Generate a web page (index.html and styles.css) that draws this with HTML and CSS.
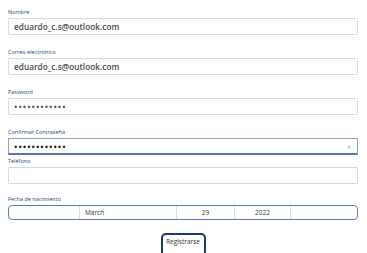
FILE: index.html
```html
<!DOCTYPE html>
<html lang="es">
<head>
    <meta charset="UTF-8">
    <meta name="viewport" content="width=device-width, initial-scale=1.0">
    <title>Registro</title>
    <link rel="stylesheet" href="styles.css">
</head>
<body>
    <form class="signup">
        <div class="field">
            <label for="nombre">Nombre</label>
            <input type="text" id="nombre" value="eduardo_c.s@outlook.com">
        </div>
        <div class="field">
            <label for="correo">Correo electrónico</label>
            <input type="text" id="correo" value="eduardo_c.s@outlook.com">
        </div>
        <div class="field">
            <label for="password">Password</label>
            <input type="password" id="password" class="secret" value="abcdefghijkl">
        </div>
        <div class="field field-tight">
            <label for="confirmar">Confirmar Contraseña</label>
            <div class="input-wrap focused">
                <input type="password" id="confirmar" class="secret dark" value="abcdefghijkl">
                <span class="clear">&#x2715;</span>
            </div>
        </div>
        <div class="field field-phone">
            <label for="telefono">Teléfono</label>
            <input type="text" id="telefono" value="">
        </div>
        <div class="field">
            <label>Fecha de nacimiento</label>
            <div class="date-picker">
                <span class="seg seg-side"></span>
                <span class="seg seg-month">March</span>
                <span class="seg seg-day">29</span>
                <span class="seg seg-year">2022</span>
                <span class="seg seg-side"></span>
            </div>
        </div>
        <div class="actions">
            <button type="button">Registrarse</button>
        </div>
    </form>
</body>
</html>
```

FILE: styles.css
```css
body {
    margin: 0;
    padding: 8px 9px 0 8px;
    background: #ffffff;
    font-family: "Open Sans", "Noto Sans", sans-serif;
    color: #333;
    overflow: hidden;
}

.signup {
    display: flex;
    flex-direction: column;
}

.field {
    display: flex;
    flex-direction: column;
    margin-bottom: 13px;
}

.field-tight {
    margin-bottom: 2px;
}

.field-phone {
    margin-bottom: 11px;
}

label {
    font-size: 5.5px;
    line-height: 8px;
    height: 8px;
    margin-bottom: 2px;
    color: #23467f;
}

input[type="text"],
input[type="password"] {
    display: block;
    box-sizing: border-box;
    width: 100%;
    height: 17px;
    margin: 0;
    padding: 0 5px;
    border: 1px solid #dadada;
    border-radius: 1px;
    background: #fff;
    font-family: "Open Sans", "Noto Sans", sans-serif;
    font-size: 8.3px;
    font-weight: 600;
    color: #4a4a4a;
    outline: none;
}

input.secret {
    font-size: 9px;
    letter-spacing: 1px;
    color: #555;
}

.input-wrap {
    position: relative;
}

.focused input {
    border-color: #8c9ec4;
    border-bottom: 2px solid #5b75ad;
}

input.secret.dark {
    color: #111;
}

.clear {
    position: absolute;
    right: 7px;
    top: 50%;
    transform: translateY(-50%);
    font-size: 5px;
    line-height: 5px;
    color: #888;
}

.date-picker {
    box-sizing: border-box;
    display: flex;
    height: 15px;
    border: 1px solid #5d7bb4;
    border-radius: 4px;
    font-size: 6.5px;
    color: #333;
}

.seg {
    display: flex;
    align-items: center;
    border-right: 1px solid #dcdcdc;
}

.seg:last-child {
    border-right: none;
}

.seg-side {
    width: 70px;
}

.seg-month {
    width: 91px;
    padding-left: 5px;
}

.seg-day {
    width: 57px;
    justify-content: center;
}

.seg-year {
    width: 55px;
    justify-content: center;
}

.seg-side:last-child {
    flex: 1;
}

.actions {
    display: flex;
    justify-content: center;
}

button {
    width: 45px;
    height: 24px;
    padding: 0 0 8px 0;
    border: 2px solid #213a6e;
    border-radius: 5px;
    background: #fff;
    font-family: "Open Sans", "Noto Sans", sans-serif;
    font-size: 6.5px;
    color: #333;
}
```
